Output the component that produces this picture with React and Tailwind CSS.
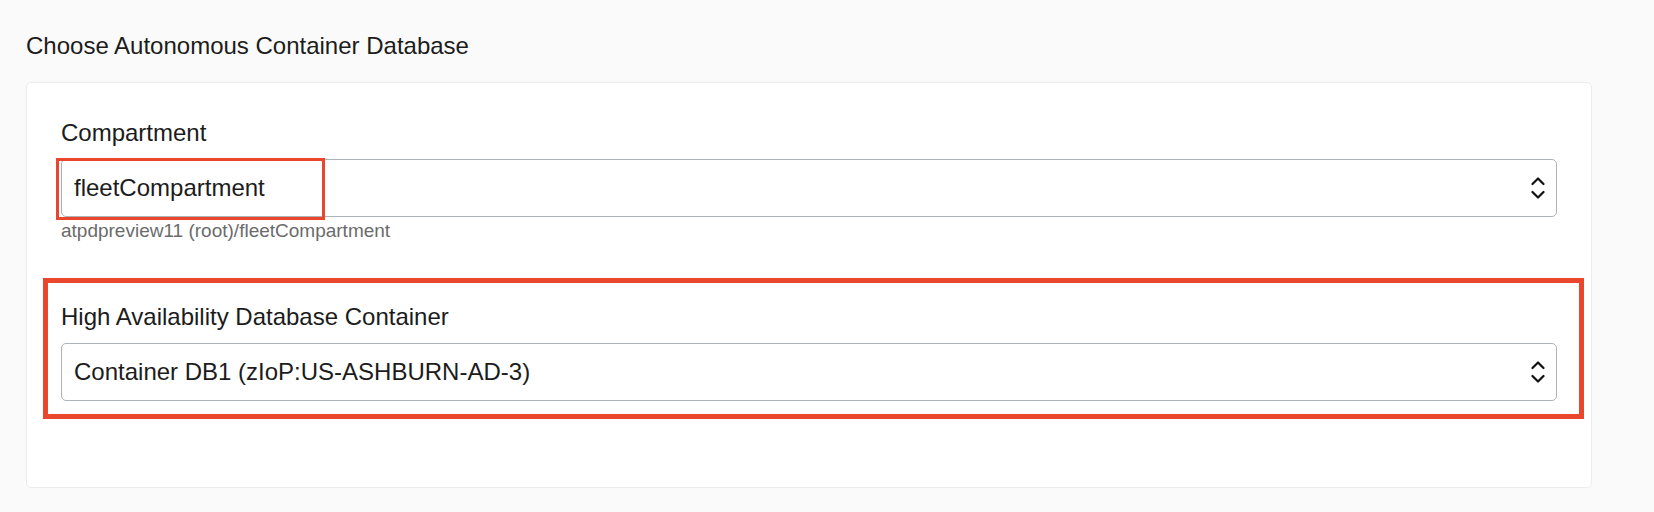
import React from 'react';

const ChevronUpDown = () => (
    <svg width="14" height="24" viewBox="0 0 14 24" fill="none" stroke="#111" strokeWidth="2.2" strokeLinecap="round" strokeLinejoin="round">
        <path d="M1.5 8 L7 2.5 L12.5 8" />
        <path d="M1.5 16 L7 21.5 L12.5 16" />
    </svg>
);

const SelectBox = ({ value }) => (
    <div className="flex h-[58px] items-center justify-between rounded-[5px] border border-[#adb3b9] bg-white pl-[12px] pr-[11px]">
        <span className="text-[24px] leading-[28px] text-[#1c1c1c]">{value}</span>
        <ChevronUpDown />
    </div>
);

const App = () => {
    return (
        <div
            className="min-h-[512px] bg-[#fafafa] pl-[26px] pt-[32px]"
            style={{ fontFamily: '"Liberation Sans", Arial, Helvetica, sans-serif' }}
        >
            <h2 className="text-[24px] leading-[28px] text-[#1c1c1c]">Choose Autonomous Container Database</h2>

            <div className="mt-[22px] w-[1566px] rounded-[5px] border border-[#ececec] bg-white px-[34px] pb-[86px] pt-[36px]">
                {/* Compartment */}
                <div>
                    <div className="text-[24px] leading-[28px] text-[#1c1c1c]">Compartment</div>
                    <div className="relative mt-[12px]">
                        <SelectBox value="fleetCompartment" />
                        <div className="pointer-events-none absolute left-[-5px] top-[-1px] h-[62px] w-[269px] border-[3px] border-[#e9462d]" />
                    </div>
                    <div className="mt-[3px] text-[19px] leading-[22px] text-[#6b6b6b]">atpdpreview11 (root)/fleetCompartment</div>
                </div>

                {/* High Availability Database Container */}
                <div className="relative mt-[61px]">
                    <div className="text-[24px] leading-[28px] text-[#1c1c1c]">High Availability Database Container</div>
                    <div className="mt-[12px]">
                        <SelectBox value="Container DB1 (zIoP:US-ASHBURN-AD-3)" />
                    </div>
                    <div className="pointer-events-none absolute bottom-[-18px] left-[-18px] right-[-27px] top-[-25px] border-[5px] border-[#e9462d]" />
                </div>
            </div>
        </div>
    );
};

export default App;
